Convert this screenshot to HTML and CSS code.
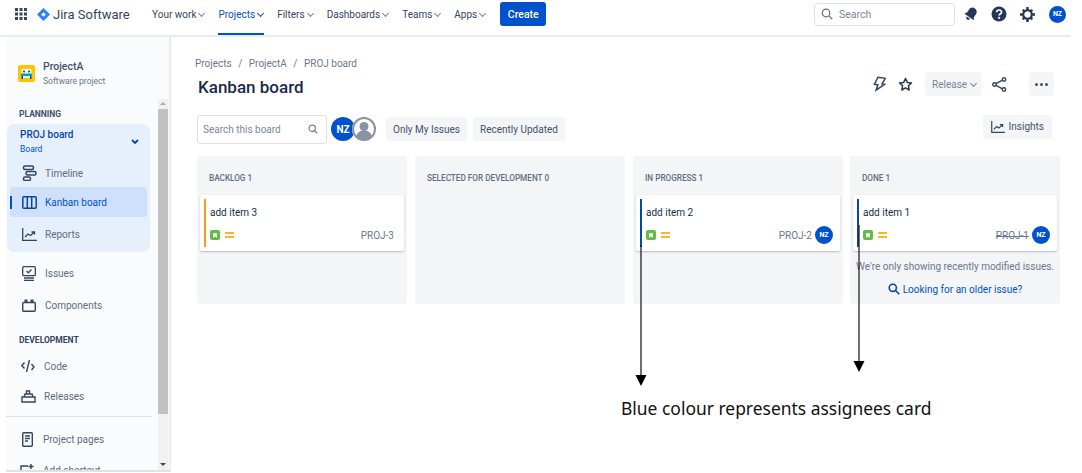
FILE: index.html
```html
<!DOCTYPE html>
<html lang="en">
<head>
    <meta charset="UTF-8">
    <title>Kanban board</title>
    <link rel="stylesheet" href="styles.css">
</head>
<body>
    <header class="topbar">
        <svg class="apps" width="12" height="12" viewBox="0 0 12 12" fill="#344563"><rect width="3" height="3"/><rect x="4.5" width="3" height="3"/><rect x="9" width="3" height="3"/><rect y="4.5" width="3" height="3"/><rect x="4.5" y="4.5" width="3" height="3"/><rect x="9" y="4.5" width="3" height="3"/><rect y="9" width="3" height="3"/><rect x="4.5" y="9" width="3" height="3"/><rect x="9" y="9" width="3" height="3"/></svg>
        <svg class="logo" width="13" height="13" viewBox="0 0 13 13"><path d="M6.5 0L13 6.5 6.5 13 0 6.5z" fill="#2684ff"/><path d="M6.5 4.2L8.8 6.5 6.5 8.8 4.2 6.5z" fill="#fff"/></svg>
        <span class="brand">Jira Software</span>
        <nav class="mainnav">
            <a>Your work <i class="chev"></i></a>
            <a class="active">Projects <i class="chev"></i></a>
            <a>Filters <i class="chev"></i></a>
            <a>Dashboards <i class="chev"></i></a>
            <a>Teams <i class="chev"></i></a>
            <a>Apps <i class="chev"></i></a>
        </nav>
        <button class="create">Create</button>
        <div class="globalsearch">
            <svg width="12" height="12" viewBox="0 0 12 12" fill="none" stroke="#5e6c84" stroke-width="1.2"><circle cx="5" cy="5" r="3.8"/><path d="M8 8l3.2 3.2"/></svg>
            <span>Search</span>
        </div>
        <svg class="topicon" width="16" height="16" viewBox="0 0 16 16" fill="#253858"><g transform="rotate(35 8 8)"><path d="M8 1.200c2.700 0 4.200 2 4.200 4.500v3.300l1.600 2.500H2.200l1.600-2.500V5.700C3.800 3.200 5.300 1.200 8 1.200z"/><path d="M6 12.500h4c0 1.400-.9 2.300-2 2.300s-2-.9-2-2.300z"/></g></svg>
        <svg class="topicon help" width="16" height="16" viewBox="0 0 16 16"><circle cx="8" cy="8" r="7.500" fill="#253858"/><path d="M5.600 6.200C5.700 4.800 6.800 4 8 4c1.400 0 2.500.9 2.500 2.200 0 1.900-2.400 1.800-2.400 3.300" fill="none" stroke="#fff" stroke-width="1.700"/><circle cx="8.100" cy="11.800" r="1.100" fill="#fff"/></svg>
        <svg class="topicon gear" width="15" height="15" viewBox="0 0 16 16"><circle cx="8" cy="8" r="4.600" fill="none" stroke="#253858" stroke-width="2.400"/><path d="M6.700 0h2.600v3H6.700zM6.700 13h2.600v3H6.700zM0 6.700h3v2.600H0zM13 6.700h3v2.600h-3zM2 3.800L3.800 2l2 2L4 5.800zM10.200 12l1.800-1.800 2 2-1.800 1.800zM12.200 2L14 3.800l-2 2L10.200 4zM4 10.200L5.800 12l-2 2L2 12.200z" fill="#253858"/></svg>
        <span class="avatar small">NZ</span>
    </header>

    <div class="layout">
        <aside class="sidebar">
            <div class="project">
                <svg width="17" height="17" viewBox="0 0 17 17"><rect width="17" height="17" rx="2" fill="#ffc400"/><rect x="3.500" y="4" width="10" height="9" fill="#e3fcef"/><rect x="3" y="8.500" width="11" height="2.500" fill="#00a3bf"/><rect x="3.500" y="11" width="1.500" height="3" fill="#253858"/><rect x="12" y="11" width="1.500" height="3" fill="#253858"/><circle cx="6" cy="6.500" r="1" fill="#253858"/><circle cx="11" cy="6.500" r="1" fill="#253858"/></svg>
                <div>
                    <div class="project-name">ProjectA</div>
                    <div class="project-type">Software project</div>
                </div>
            </div>
            <h4 class="side-title">PLANNING</h4>
            <div class="board-group">
                <div class="board-head">
                    <div>
                        <div class="board-name">PROJ board</div>
                        <div class="board-sub">Board</div>
                    </div>
                    <svg width="8" height="6" viewBox="0 0 8 6" fill="none" stroke="#0747a6" stroke-width="1.800"><path d="M1 1l3 3 3-3"/></svg>
                </div>
                <a class="side-item timeline">
                    <svg width="15" height="16" viewBox="0 0 15 16" fill="none" stroke="#344563" stroke-width="1.500"><rect x="1.500" y="1" width="10" height="3.500" rx="1.500"/><rect x="4" y="6.500" width="10" height="3.500" rx="1.500"/><rect x="1.500" y="12" width="7" height="3.500" rx="1.500"/></svg>
                    Timeline
                </a>
                <a class="side-item selected">
                    <svg width="15" height="13" viewBox="0 0 15 13" fill="none" stroke="#0747a6" stroke-width="1.500"><rect x=".8" y=".8" width="13.400" height="11.400" rx="1"/><path d="M5.300 1v11M9.700 1v11"/></svg>
                    Kanban board
                </a>
                <a class="side-item reports">
                    <svg width="15" height="13" viewBox="0 0 15 13" fill="none" stroke="#344563" stroke-width="1.300"><path d="M.7 0v12.300H15"/><path d="M3 9l3-3 2.500 1.500L12 4.500M9.500 4H12.500V6.500"/></svg>
                    Reports
                </a>
            </div>
            <a class="side-item outer issues">
                <svg width="14" height="15" viewBox="0 0 14 15" fill="none" stroke="#344563" stroke-width="1.300"><rect x=".7" y=".7" width="12.600" height="9" rx="1"/><path d="M4.500 5l1.800 1.800L9.500 3.500M2 12h10M2 14.300h10"/></svg>
                Issues
            </a>
            <a class="side-item outer components">
                <svg width="14" height="13" viewBox="0 0 14 13" fill="none" stroke="#344563" stroke-width="1.400"><rect x=".7" y="3.500" width="12.600" height="8.800" rx="1"/><rect x="2.500" y=".5" width="3" height="3" fill="#344563" stroke="none"/><rect x="8.500" y=".5" width="3" height="3" fill="#344563" stroke="none"/></svg>
                Components
            </a>
            <h4 class="side-title dev">DEVELOPMENT</h4>
            <a class="side-item outer code">
                <svg width="14" height="14" viewBox="0 0 14 14" fill="none" stroke="#344563" stroke-width="1.400"><path d="M3.500 3.500L.8 6.500l2.700 3M10.500 5L13 8l-2.500 3M8.500 1L5.500 13"/></svg>
                Code
            </a>
            <a class="side-item outer releases">
                <svg width="15" height="13" viewBox="0 0 15 13" fill="none" stroke="#344563" stroke-width="1.400"><path d="M1 7h13v5H1zM3 7l1-3h7l1 3M5.500 4V1h3v3"/></svg>
                Releases
            </a>
            <div class="side-rule"></div>
            <a class="side-item outer pages">
                <svg width="11" height="15" viewBox="0 0 11 15" fill="none" stroke="#344563" stroke-width="1.400"><rect x=".7" y=".7" width="9.600" height="13.600" rx="1"/><path d="M3 4h5M3 6.500h5M3 9h3"/></svg>
                Project pages
            </a>
            <a class="side-item outer shortcut">
                <svg width="14" height="13" viewBox="0 0 14 13" fill="none" stroke="#344563" stroke-width="1.400"><path d="M8 2H1v10M11 0v5M8.500 2.500h5"/></svg>
                Add shortcut
            </a>
            <div class="scrollbar">
                <i class="arrow-up"></i>
                <div class="thumb"></div>
                <i class="arrow-down"></i>
            </div>
        </aside>

        <main class="content">
            <div class="crumbs">Projects <b>/</b> ProjectA <b>/</b> PROJ board</div>
            <div class="titlerow">
                <h1>Kanban board</h1>
                <div class="actions">
                    <svg width="14" height="16" viewBox="0 0 14 16" fill="none" stroke="#344563" stroke-width="1.500"><path d="M5 1.500h7.500L10 7.500h2.500L5 14.500l1-5.500H2.500z" transform="rotate(8 7 8)"/></svg>
                    <svg class="star" width="15" height="15" viewBox="0 0 15 15" fill="none" stroke="#253858" stroke-width="1.500"><path d="M7.500 1.500l1.800 3.900 4.200.5-3.100 2.900.8 4.200-3.700-2.100-3.700 2.100.8-4.200L1.500 5.900l4.200-.5z" stroke-linejoin="round"/></svg>
                    <button class="release">Release <i class="chev"></i></button>
                    <svg class="share" width="15" height="15" viewBox="0 0 15 15" fill="none" stroke="#344563" stroke-width="1.400"><circle cx="12" cy="2.500" r="1.700"/><circle cx="2.500" cy="7.500" r="1.700"/><circle cx="12" cy="12.500" r="1.700"/><path d="M4 6.700l6.500-3.500M4 8.300l6.500 3.500"/></svg>
                    <button class="more"><i></i><i></i><i></i></button>
                </div>
            </div>
            <div class="toolbar">
                <div class="boardsearch">
                    <span>Search this board</span>
                    <svg width="10" height="10" viewBox="0 0 12 12" fill="none" stroke="#5e6c84" stroke-width="1.300"><circle cx="5" cy="5" r="3.800"/><path d="M8 8l3.200 3.200"/></svg>
                </div>
                <span class="avatar big">NZ</span>
                <span class="avatar ghost">
                    <svg width="24" height="24" viewBox="0 0 24 24"><circle cx="12" cy="12" r="11" fill="#fff" stroke="#8993a4" stroke-width="2"/><circle cx="12" cy="9.500" r="4.500" fill="#8993a4"/><path d="M4 20c1-5 4-6.500 8-6.500s7 1.500 8 6.500a11 11 0 0 1-16 0z" fill="#8993a4"/></svg>
                </span>
                <button class="filter first">Only My Issues</button>
                <button class="filter">Recently Updated</button>
                <button class="insights">
                    <svg width="14" height="12" viewBox="0 0 15 13" fill="none" stroke="#344563" stroke-width="1.300"><path d="M.7 0v12.300H15"/><path d="M3 9l3-3 2.500 1.500L12 4.500M9.500 4H12.500V6.500"/></svg>
                    Insights
                </button>
            </div>
            <div class="board">
                <section class="column">
                    <h5>BACKLOG 1</h5>
                    <article class="card orange">
                        <p>add item 3</p>
                        <div class="card-foot">
                            <span class="story"><svg width="4" height="5" viewBox="0 0 6 7" fill="#fff"><path d="M0 0h6v7L3 5 0 7z"/></svg></span>
                            <span class="prio"></span>
                            <span class="key">PROJ-3</span>
                        </div>
                    </article>
                </section>
                <section class="column">
                    <h5>SELECTED FOR DEVELOPMENT 0</h5>
                </section>
                <section class="column">
                    <h5>IN PROGRESS 1</h5>
                    <article class="card blue">
                        <p>add item 2</p>
                        <div class="card-foot">
                            <span class="story"><svg width="4" height="5" viewBox="0 0 6 7" fill="#fff"><path d="M0 0h6v7L3 5 0 7z"/></svg></span>
                            <span class="prio"></span>
                            <span class="key">PROJ-2</span>
                            <span class="avatar card-av">NZ</span>
                        </div>
                    </article>
                </section>
                <section class="column">
                    <h5>DONE 1</h5>
                    <article class="card blue">
                        <p>add item 1</p>
                        <div class="card-foot">
                            <span class="story"><svg width="4" height="5" viewBox="0 0 6 7" fill="#fff"><path d="M0 0h6v7L3 5 0 7z"/></svg></span>
                            <span class="prio"></span>
                            <span class="key done">PROJ-1</span>
                            <span class="avatar card-av">NZ</span>
                        </div>
                    </article>
                    <div class="older-note">We're only showing recently modified issues.</div>
                    <div class="older-link">
                        <svg width="12" height="12" viewBox="0 0 12 12" fill="none" stroke="#0747a6" stroke-width="1.600"><circle cx="4.800" cy="4.800" r="3.600"/><path d="M7.500 7.500l3.800 3.800"/></svg>
                        Looking for an older issue?
                    </div>
                </section>
            </div>
            <p class="caption">Blue colour represents assignees card</p>
        </main>
    </div>

    <svg class="callout one" width="12" height="141" viewBox="0 0 12 141"><path d="M6 0v130" stroke="#222" stroke-width="1.300"/><path d="M.5 130h11L6 141z" fill="#000"/></svg>
    <svg class="callout two" width="12" height="147" viewBox="0 0 12 147"><path d="M6 0v136" stroke="#222" stroke-width="1.300"/><path d="M.5 136h11L6 147z" fill="#000"/></svg>
</body>
</html>
```

FILE: styles.css
```css
* { box-sizing: border-box; }
html, body { height: 473px; overflow: hidden; }
body {
    margin: 0;
    position: relative;
    background: #fff;
    color: #42526e;
    font-family: Roboto, "Noto Sans", sans-serif;
    font-size: 10px;
}
button { font-family: inherit; border: none; cursor: pointer; }

/* top bar */
.topbar {
    display: flex;
    align-items: center;
    height: 37px;
    width: 1071px;
    padding: 0 5px 7px 15px;
    border-bottom: 2px solid #e9ebee;
}
.apps { flex: none; }
.logo { margin-left: 10px; flex: none; }
.brand { margin-left: 3px; font-size: 13px; color: #344563; width: 99px; white-space: nowrap; }
.mainnav { display: flex; height: 35px; margin-bottom: -7px; }
.mainnav a {
    display: flex;
    align-items: center;
    gap: 2px;
    padding: 0 0 4px;
    margin-right: 13px;
    color: #344563;
    font-size: 10px;
    border-bottom: 2px solid transparent;
    white-space: nowrap;
}
.mainnav a.active { color: #0052cc; border-bottom-color: #0052cc; }
.chev {
    display: inline-block;
    width: 5px;
    height: 5px;
    margin: -2px 1px 0 1px;
    border-right: 1px solid #7a869a;
    border-bottom: 1px solid #7a869a;
    transform: rotate(45deg);
}
.active .chev { border-color: #0052cc; }
.create {
    width: 46px;
    height: 24px;
    margin-left: 1px;
    background: #0052cc;
    color: #fff;
    border-radius: 3px;
    font-size: 10.500px;
    font-weight: 500;
}
.globalsearch {
    display: flex;
    align-items: center;
    gap: 6px;
    width: 141px;
    height: 23px;
    margin-left: auto;
    padding-left: 6px;
    border: 1px solid #dfe1e6;
    border-radius: 4px;
    color: #7a869a;
    font-size: 10.500px;
}
.topicon { margin-left: 8px; flex: none; }
.topicon.help { margin-left: 12px; }
.topicon.gear { margin-left: 13px; }
.avatar {
    display: flex;
    align-items: center;
    justify-content: center;
    flex: none;
    border-radius: 50%;
    background: #0052cc;
    color: #fff;
    font-weight: 700;
}
.avatar.small { width: 17px; height: 17px; margin-left: 14px; font-size: 7px; }

/* sidebar */
.layout { display: flex; height: 436px; padding-left: 6px; }
.sidebar {
    position: relative;
    flex: none;
    width: 165px;
    height: 435px;
    overflow: hidden;
    padding-top: 22px;
    background: #fafbfc;
    border-right: 2px solid #ebecf0;
    border-bottom: 2px solid #e0e2e6;
}
.project { display: flex; align-items: center; gap: 8px; padding-left: 12px; }
.project-name { font-size: 10.500px; font-weight: 500; color: #42526e; line-height: 15px; }
.project-type { font-size: 8.500px; color: #6b778c; line-height: 14px; }
.side-title {
    margin: 20px 0 0 13px;
    font-size: 8.500px;
    font-weight: 700;
    line-height: 12px;
    color: #42526e;
}
.side-title.dev { margin-top: 14px; color: #344563; }
.board-group {
    width: 143px;
    height: 128px;
    margin: 4px 0 0 1px;
    background: #e6effc;
    border-radius: 7px;
}
.board-head {
    display: flex;
    align-items: center;
    justify-content: space-between;
    height: 35px;
    padding: 1px 11px 0 13px;
}
.board-name { font-size: 10px; font-weight: 500; color: #0747a6; line-height: 14px; }
.board-sub { font-size: 8.500px; color: #0052cc; line-height: 15px; }
.side-item {
    display: flex;
    align-items: center;
    gap: 8px;
    height: 30px;
    padding-left: 15px;
    color: #5e6c84;
    font-size: 10px;
    white-space: nowrap;
}
.side-item svg { flex: none; }
.side-item.timeline { height: 28px; }
.side-item.selected {
    position: relative;
    width: 137px;
    margin-left: 3px;
    padding-left: 12px;
    background: #cfe0fb;
    border-radius: 3px;
    color: #0052cc;
}
.side-item.selected::before {
    content: "";
    position: absolute;
    left: 0;
    top: 9px;
    width: 2px;
    height: 13px;
    background: #0052cc;
}
.side-item.reports { margin-top: 2px; }
.side-item.outer { padding-left: 16px; gap: 9px; }
.side-item.issues { margin-top: 6px; }
.side-item.components { margin-top: 2px; }
.side-item.code { padding-left: 15px; margin-top: 5px; }
.side-item.releases { padding-left: 15px; gap: 8px; }
.side-rule { width: 146px; height: 1px; margin-top: 5px; background: #dfe1e6; }
.side-item.pages { margin-top: 7px; padding-left: 16px; gap: 10px; }
.side-item.shortcut { margin-top: 1px; padding-left: 14px; }
.scrollbar {
    position: absolute;
    left: 152px;
    top: 62px;
    display: flex;
    flex-direction: column;
    align-items: center;
    width: 10px;
    height: 372px;
    background: #f1f1f1;
}
.scrollbar .thumb { width: 10px; height: 305px; margin-top: 4px; background: #c1c1c1; }
.arrow-up, .arrow-down { width: 0; height: 0; border: 3px solid transparent; }
.arrow-up { border-bottom-color: #aaa; }
.arrow-down { border-top-color: #444; margin-top: 49px; }

/* main area */
.content { flex: 1; padding: 20px 0 0 24px; }
.crumbs { font-size: 10px; line-height: 14px; color: #6b778c; white-space: nowrap; }
.crumbs b { font-weight: 400; margin: 0 4px; }
.titlerow { display: flex; align-items: center; height: 32px; padding-left: 3px; }
h1 { margin: 0; font-size: 17px; font-weight: 500; color: #172b4d; }
.actions { display: flex; align-items: center; margin: 0 25px 6px auto; width: 185px; }
.actions .star { margin-left: 12px; }
.actions .share { margin-left: 11px; }
.release {
    display: flex;
    align-items: center;
    gap: 3px;
    width: 56px;
    height: 24px;
    margin-left: 12px;
    padding: 0 0 0 7px;
    background: #f4f5f7;
    border-radius: 3px;
    color: #7a869a;
    font-size: 10px;
}
.more {
    display: flex;
    align-items: center;
    justify-content: center;
    gap: 2px;
    width: 25px;
    height: 24px;
    margin-left: 22px;
    background: #f4f5f7;
    border-radius: 3px;
}
.more i { width: 3px; height: 3px; border-radius: 50%; background: #42526e; }
.toolbar { display: flex; align-items: center; height: 30px; margin-top: 11px; padding-left: 2px; }
.boardsearch {
    display: flex;
    align-items: center;
    justify-content: space-between;
    width: 130px;
    height: 29px;
    padding: 0 8px 0 5px;
    border: 1px solid #dfe1e6;
    border-radius: 3px;
    color: #7a869a;
    font-size: 10px;
}
.avatar.big { width: 24px; height: 24px; margin-left: 4px; font-size: 10px; }
.avatar.ghost { width: 24px; height: 24px; margin-left: -3px; background: #fff; }
.filter {
    height: 24px;
    margin-left: 6px;
    padding: 0 7px;
    background: #f4f5f7;
    border-radius: 3px;
    color: #42526e;
    font-size: 10px;
}
.filter.first { margin-left: 10px; }
.insights {
    display: flex;
    align-items: center;
    gap: 4px;
    height: 24px;
    margin: -5px 30px 0 auto;
    padding: 0 8px;
    background: #f4f5f7;
    border-radius: 3px;
    color: #42526e;
    font-size: 10px;
}

/* board */
.board { display: flex; gap: 8px; margin: 12px 0 0 2px; }
.column {
    width: 210px;
    height: 148px;
    padding: 0 3px;
    background: #f4f5f7;
    border-radius: 3px;
}
.column:last-child { margin-left: -1px; }
.column h5 {
    margin: 0;
    height: 39px;
    padding: 16px 0 0 9px;
    font-size: 8.200px;
    font-weight: 500;
    line-height: 12px;
    color: #5e6c84;
}
.card {
    position: relative;
    height: 56px;
    padding: 10px 10px 0 10px;
    background: #fff;
    border-radius: 2px;
    box-shadow: 0 1px 2px rgba(9, 30, 66, .25);
}
.card::before {
    content: "";
    position: absolute;
    left: 4px;
    top: 4px;
    width: 2px;
    height: 48px;
}
.card.orange::before { background: #ff991f; }
.card.blue::before { background: #0747a6; }
.card p { margin: 0; font-size: 10px; line-height: 15px; color: #172b4d; }
.card-foot { display: flex; align-items: center; height: 18px; margin-top: 6px; }
.story {
    display: flex;
    align-items: center;
    justify-content: center;
    width: 10px;
    height: 10px;
    background: #65ba43;
    border-radius: 2px;
}
.prio { width: 9px; height: 6px; margin-left: 5px; border-top: 2px solid #fbb52c; border-bottom: 2px solid #fbb52c; }
.key { margin-left: auto; color: #6b778c; font-size: 10px; }
.key.done { text-decoration: line-through; }
.avatar.card-av { width: 18px; height: 18px; margin: 0 -3px 0 3px; font-size: 7px; }
.older-note { margin-top: 9px; text-align: center; font-size: 10px; line-height: 14px; color: #6b778c; white-space: nowrap; }
.older-link { display: flex; align-items: center; justify-content: center; gap: 3px; margin-top: 9px; font-size: 10px; color: #0052cc; }
.caption { margin: 92px 0 0 426px; font-family: "Noto Sans", sans-serif; font-size: 17.450px; color: #111; white-space: nowrap; }

/* hand drawn arrows laid over the board */
.callout { position: absolute; }
.callout.one { left: 635px; top: 245px; }
.callout.two { left: 853px; top: 225px; }
```
